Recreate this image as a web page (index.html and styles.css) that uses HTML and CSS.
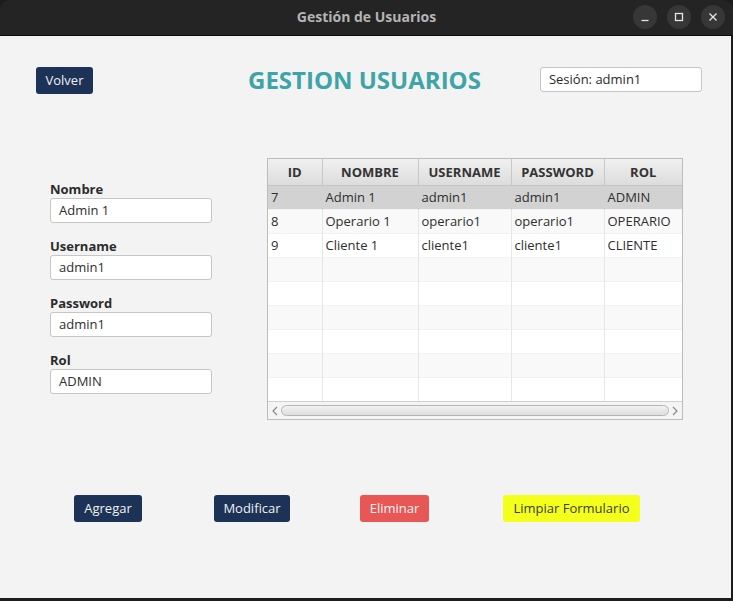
FILE: index.html
```html
<!DOCTYPE html>
<html lang="es">
<head>
<meta charset="utf-8">
<title>Gestión de Usuarios</title>
<link rel="stylesheet" href="styles.css">
</head>
<body>
<div class="window">
  <div class="titlebar">
    <span class="wtitle">Gestión de Usuarios</span>
    <div class="wbtns">
      <span class="wbtn"><svg width="10" height="10" viewBox="0 0 10 10"><path d="M1.5 8.5h7" stroke="#e6e6e6" stroke-width="1.3"/></svg></span>
      <span class="wbtn"><svg width="10" height="10" viewBox="0 0 10 10"><rect x="1.5" y="1.5" width="7" height="7" fill="none" stroke="#e6e6e6" stroke-width="1.3"/></svg></span>
      <span class="wbtn"><svg width="10" height="10" viewBox="0 0 10 10"><path d="M1.5 1.5l7 7M8.5 1.5l-7 7" stroke="#e6e6e6" stroke-width="1.3"/></svg></span>
    </div>
  </div>
  <div class="content">
    <div class="header">
      <button class="btn navy volver">Volver</button>
      <h1 class="heading">GESTION USUARIOS</h1>
      <div class="session">Sesión: admin1</div>
    </div>
    <div class="main">
      <div class="form">
        <div class="field"><label>Nombre</label><div class="input">Admin 1</div></div>
        <div class="field"><label>Username</label><div class="input">admin1</div></div>
        <div class="field"><label>Password</label><div class="input">admin1</div></div>
        <div class="field"><label>Rol</label><div class="input">ADMIN</div></div>
      </div>
      <div class="tablebox">
        <table class="grid">
          <colgroup><col class="c1"><col class="c2"><col class="c3"><col class="c4"><col class="c5"></colgroup>
          <thead><tr><th>ID</th><th>NOMBRE</th><th>USERNAME</th><th>PASSWORD</th><th>ROL</th></tr></thead>
          <tbody>
            <tr class="sel"><td>7</td><td>Admin 1</td><td>admin1</td><td>admin1</td><td>ADMIN</td></tr>
            <tr><td>8</td><td>Operario 1</td><td>operario1</td><td>operario1</td><td>OPERARIO</td></tr>
            <tr><td>9</td><td>Cliente 1</td><td>cliente1</td><td>cliente1</td><td>CLIENTE</td></tr>
            <tr><td></td><td></td><td></td><td></td><td></td></tr>
            <tr><td></td><td></td><td></td><td></td><td></td></tr>
            <tr><td></td><td></td><td></td><td></td><td></td></tr>
            <tr><td></td><td></td><td></td><td></td><td></td></tr>
            <tr><td></td><td></td><td></td><td></td><td></td></tr>
            <tr><td></td><td></td><td></td><td></td><td></td></tr>
          </tbody>
        </table>
        <div class="hscroll">
          <svg class="arrow" width="8" height="10" viewBox="0 0 8 10"><path d="M6 1L2 5l4 4" fill="none" stroke="#8a8a8a" stroke-width="1.2"/></svg>
          <div class="thumb"></div>
          <svg class="arrow" width="8" height="10" viewBox="0 0 8 10"><path d="M2 1l4 4-4 4" fill="none" stroke="#8a8a8a" stroke-width="1.2"/></svg>
        </div>
      </div>
    </div>
    <div class="actions">
      <button class="btn navy b-add">Agregar</button>
      <button class="btn navy b-mod">Modificar</button>
      <button class="btn red b-del">Eliminar</button>
      <button class="btn yellow b-clr">Limpiar Formulario</button>
    </div>
  </div>
</div>
</body>
</html>
```
FILE: styles.css
```css
* { box-sizing: border-box; }
html, body { margin: 0; padding: 0; }
body {
  width: 733px; height: 601px; overflow: hidden;
  background: #1a1a1a;
  font-family: "Open Sans", "Noto Sans", sans-serif;
}
.window { width: 733px; height: 601px; background: #1c1c1c; }
.titlebar {
  height: 36px; background: #242424; border-bottom: 1px solid #0a0a0a;
  border-radius: 10px 10px 0 0;
  position: relative; display: flex; align-items: center; justify-content: center;
}
.wtitle { color: #b4b4b4; font-weight: 700; font-size: 14px; letter-spacing: 0; margin-top: -2px; }
.wbtns { position: absolute; right: 8px; top: 5px; display: flex; gap: 10px; }
.wbtn {
  width: 24px; height: 24px; border-radius: 50%; background: #373737;
  display: flex; align-items: center; justify-content: center;
}
.content {
  width: 731px; height: 562px; background: #f3f3f3;
  display: flex; flex-direction: column;
}
.header { display: flex; align-items: flex-start; padding: 31px 0 0 36px; height: 58px; }
.btn {
  font-family: "Open Sans", "Noto Sans", sans-serif; font-size: 13px;
  border: none; border-radius: 3px; height: 27px; padding: 0 9px; line-height: 27px;
}
.navy { background: #1c3357; color: #f0f0f0; }
.red { background: #e85656; color: #f6f6f6; }
.yellow { background: #f4ff1c; color: #3b3b3b; }
.volver { width: 57px; padding: 0; }
.heading {
  margin: 0 0 0 155px; font-size: 24px; font-weight: 700; color: #3ea4a7;
  line-height: 26px; padding-top: 0; letter-spacing: 0;
}
.session {
  margin-left: 59px; width: 162px; height: 25px; background: #fff;
  border: 1px solid #c4c4c4; border-radius: 3px; font-size: 13px; color: #2a2a2a;
  padding: 0 8px; line-height: 23px;
}
.main { display: flex; align-items: flex-start; margin-top: 64px; }
.form { margin-left: 50px; width: 162px; padding-top: 22px; display: flex; flex-direction: column; gap: 14px; }
.field label { display: block; font-size: 13px; font-weight: 700; color: #2b2b2b; line-height: 18px; }
.input {
  height: 25px; background: #fff; border: 1px solid #c6c6c6; border-radius: 3px;
  font-size: 13px; color: #2e2e2e; line-height: 23px; padding: 0 8px;
}
.tablebox { margin-left: 55px; width: 416px; border: 1px solid #bcbcbc; background: #fff; }
.grid { border-collapse: collapse; width: 414px; table-layout: fixed; font-size: 13px; color: #2e2e2e; }
.c1 { width: 54px; } .c2 { width: 96px; } .c3 { width: 93px; } .c4 { width: 93px; } .c5 { width: 78px; }
.grid th {
  height: 26px; padding: 0; font-weight: 700; text-align: center; color: #333;
  background: linear-gradient(#f0f0f0, #dcdcdc);
  border-right: 1px solid #c8c8c8; border-bottom: 1px solid #c4c4c4;
}
.grid th:last-child, .grid td:last-child { border-right: none; }
.grid td {
  height: 24px; padding: 0 0 0 3px; border-right: 1px solid #e6e6e6;
  white-space: nowrap; overflow: hidden; line-height: 23px;
}
.grid tbody tr:nth-child(odd) { background: #fff; }
.grid tbody tr:nth-child(even) { background: #f9f9f9; }
.grid tbody tr.sel { background: #d2d2d2; }
.grid tbody tr.sel td { border-right-color: #d2d2d2; }
.grid tbody tr + tr td { border-top: 1px solid #f2f2f2; }
.hscroll {
  height: 18px; border-top: 1px solid #d0d0d0; background: #f4f4f4;
  display: flex; align-items: center; padding: 0 3px; gap: 2px;
}
.thumb {
  flex: 1; height: 11px; border: 1px solid #b5b5b5; border-radius: 6px;
  background: linear-gradient(#f2f2f2, #dedede);
}
.actions { display: flex; margin-top: 75px; padding-left: 74px; }
.b-add { width: 68px; padding: 0; }
.b-mod { width: 76px; padding: 0; margin-left: 72px; }
.b-del { width: 69px; padding: 0; margin-left: 70px; }
.b-clr { width: 137px; padding: 0; margin-left: 74px; }
```
